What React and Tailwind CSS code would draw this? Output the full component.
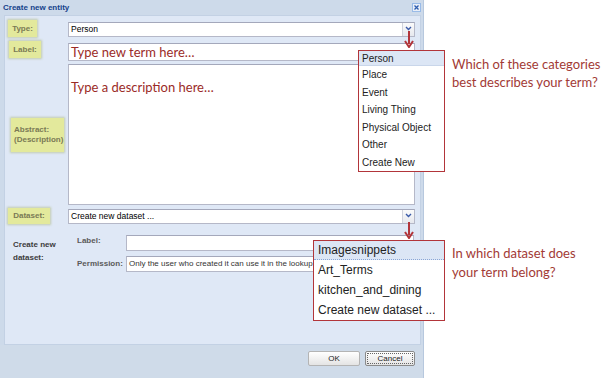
import React from 'react';

const ui = { fontFamily: '"Liberation Sans", Arial, sans-serif' };
const note = { fontFamily: 'Lato, "Open Sans", sans-serif' };

function FieldLabel({ children, className = '' }) {
  return (
    <div
      className={`flex items-center justify-center bg-[#e3e99c] text-[8px] font-bold leading-[10px] text-[#7a7a55] shadow-[0_0_2px_1px_rgba(160,170,90,0.45)] ${className}`}
    >
      {children}
    </div>
  );
}

function Chevron() {
  return (
    <svg width="7" height="5" viewBox="0 0 7 5">
      <polyline points="1,1 3.5,3.5 6,1" fill="none" stroke="#3a5aa8" strokeWidth="1.4" />
    </svg>
  );
}

function SelectBox({ value, className = '' }) {
  return (
    <div className={`flex items-center bg-white border border-[#b5b8c8] border-t-[#a4a8bb] ${className}`}>
      <span className="flex-1 pl-[2px] text-[8.5px] text-black truncate">{value}</span>
      <div className="flex h-full w-[12px] items-start justify-center border-l border-[#d0d3dc] bg-gradient-to-b from-[#fbfbfb] to-[#e6e8ee] pt-[3px]">
        <Chevron />
      </div>
    </div>
  );
}

function RedArrow({ className, height }) {
  return (
    <svg className={className} width="10" height={height} viewBox={`0 0 10 ${height}`}>
      <line x1="5" y1="0" x2="5" y2={height - 4} stroke="#b2353a" strokeWidth="2" />
      <polyline points={`1,${height - 7} 5,${height - 1} 9,${height - 7}`} fill="none" stroke="#b2353a" strokeWidth="2" />
    </svg>
  );
}

export default function App() {
  const categories = ['Place', 'Event', 'Living Thing', 'Physical Object', 'Other', 'Create New'];
  const datasets = ['Art_Terms', 'kitchen_and_dining', 'Create new dataset ...'];

  return (
    <div className="relative flex h-[378px] w-[609px] overflow-hidden bg-white" style={ui}>
      {/* Dialog window */}
      <div className="flex h-full w-[424px] flex-col bg-[#cddaea] border-r border-[#b7c8de]">
        <div className="flex h-[15px] items-center justify-between pl-[3px] pr-[2px]">
          <span className="text-[8px] font-bold text-[#15428b]">Create new entity</span>
          <div className="flex h-[9px] w-[9px] items-center justify-center border border-[#99bbe8] bg-[#e8eef8]">
            <svg width="5" height="5" viewBox="0 0 5 5">
              <path d="M0.5 0.5 L4.5 4.5 M4.5 0.5 L0.5 4.5" stroke="#2d5cae" strokeWidth="1.3" />
            </svg>
          </div>
        </div>

        {/* Body */}
        <div className="mx-[4px] mr-[2px] flex h-[330px] flex-col bg-[#dfe8f6] pt-[4px] pr-[5px] border border-[#c3d1e4]">
          <div className="flex h-[18px]">
            <div className="w-[63px] pl-[3px]">
              <FieldLabel className="h-[17px] w-[29px]">Type:</FieldLabel>
            </div>
            <SelectBox value="Person" className="mt-[2px] h-[15px] flex-1" />
          </div>

          <div className="mt-[3px] flex h-[20px]">
            <div className="w-[63px] pl-[4px]">
              <FieldLabel className="h-[17px] w-[32px]">Label:</FieldLabel>
            </div>
            <div className="mt-[2px] flex h-[18px] flex-1 items-center border border-[#b5b8c8] border-t-[#a4a8bb] bg-white pl-[2px]">
              <span className="text-[13px] leading-none text-[#9b2b27]" style={note}>Type new term here…</span>
            </div>
          </div>

          <div className="mt-[3px] flex h-[141px]">
            <div className="flex w-[63px] items-center pl-[6px]">
              <FieldLabel className="h-[34px] w-[53px] flex-col !items-start pl-[3px]">
                <span>Abstract:</span>
                <span>(Description)</span>
              </FieldLabel>
            </div>
            <div
              className="flex-1 border border-[#b5b8c8] border-t-[#a4a8bb] bg-white pl-[2px] pt-[16px] text-[13px] leading-none text-[#9b2b27]"
              style={note}
            >
              Type a description here…
            </div>
          </div>

          <div className="mt-[3px] flex h-[17px]">
            <div className="w-[63px] pl-[3px]">
              <FieldLabel className="h-[16px] w-[42px]">Dataset:</FieldLabel>
            </div>
            <SelectBox value="Create new dataset ..." className="mt-[1px] h-[15px] flex-1" />
          </div>

          <div className="mt-[10px] flex h-[37px]">
            <div className="flex w-[72px] items-center pl-[8px] pb-[5px] text-[8px] font-bold leading-[13px] text-[#3c3c3c]">
              Create new<br />dataset:
            </div>
            <div className="flex w-[49px] flex-col text-[8px] font-bold text-[#5a5a5a]">
              <div className="flex h-[16px] items-start">Label:</div>
              <div className="mt-[5px] flex h-[16px] items-center">Permission:</div>
            </div>
            <div className="flex flex-1 flex-col pr-[1px]">
              <div className="h-[16px] border border-[#b5b8c8] border-t-[#a4a8bb] bg-white" />
              <div className="mt-[5px] flex h-[16px] items-center overflow-hidden whitespace-nowrap border border-[#b5b8c8] border-t-[#a4a8bb] bg-white pl-[2px] text-[8px] text-[#333]">
                Only the user who created it can use it in the lookup
              </div>
            </div>
          </div>
        </div>

        {/* Footer */}
        <div className="flex flex-1 items-start justify-end gap-[5px] pr-[8px] pt-[6px] bg-[#cfdbe9]">
          <button className="h-[15px] w-[52px] rounded-[2px] border border-[#b4b4b4] bg-gradient-to-b from-white to-[#e4e4e4] text-[8px] text-[#222]">
            OK
          </button>
          <button className="flex h-[15px] w-[50px] items-center justify-center rounded-[2px] border border-[#8a8a8a] bg-gradient-to-b from-white to-[#e4e4e4] p-[1px] text-[8px] text-[#222]">
            <span className="flex h-full w-full items-center justify-center border border-dotted border-[#666]">Cancel</span>
          </button>
        </div>
      </div>

      {/* Category dropdown overlay */}
      <RedArrow className="absolute left-[404px] top-[31px]" height={17} />
      <div className="absolute left-[358px] top-[50px] h-[122px] w-[87px] border border-[#b2353a] bg-white text-[10px] text-[#222]">
        <div className="flex h-[15px] items-center bg-[#dce6f5] pl-[3px] border-b border-[#c9d6ea]">Person</div>
        {categories.map((c) => (
          <div key={c} className="flex h-[17.5px] items-center pl-[3px]">{c}</div>
        ))}
      </div>
      <div className="absolute left-[452px] top-[55px] text-[13px] leading-[18px] text-[#a23a35]" style={note}>
        Which of these categories<br />best describes your term?
      </div>

      {/* Dataset dropdown overlay */}
      <RedArrow className="absolute left-[404px] top-[222px]" height={17} />
      <div className="absolute left-[313px] top-[240px] h-[81px] w-[132px] border border-[#b2353a] bg-white text-[12px] text-[#222]">
        <div className="flex h-[19px] items-center bg-[#dce6f5] pl-[4px] border-b border-dotted border-[#8aa6d6]">Imagesnippets</div>
        {datasets.map((d) => (
          <div key={d} className="flex h-[20px] items-center pl-[4px]">{d}</div>
        ))}
      </div>
      <div className="absolute left-[452px] top-[244px] text-[13px] leading-[19px] text-[#a23a35]" style={note}>
        In which dataset does<br />your term belong?
      </div>
    </div>
  );
}
